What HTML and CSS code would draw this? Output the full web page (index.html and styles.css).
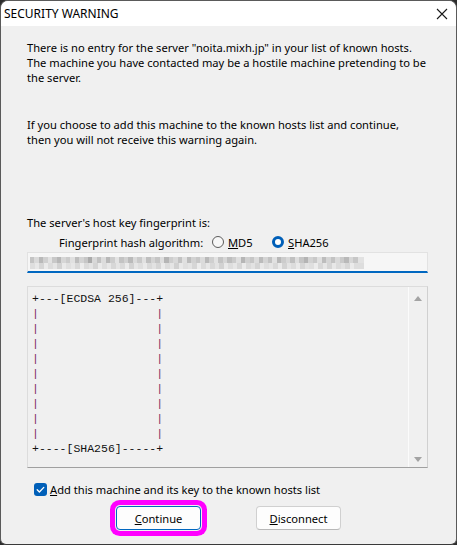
FILE: index.html
```html
<!DOCTYPE html>
<html>
<head>
<meta charset="utf-8">
<link rel="stylesheet" href="styles.css">
</head>
<body>
<div class="window">
  <div class="titlebar">
    <span class="title">SECURITY WARNING</span>
    <svg class="close" width="12" height="12" viewBox="0 0 12 12"><path d="M1 1 L11 11 M11 1 L1 11" stroke="#1a1a1a" stroke-width="1.1" fill="none"/></svg>
  </div>
  <div class="content">
    <p class="msg">There is no entry for the server "noita.mixh.jp" in your list of known hosts.<br>The machine you have contacted may be a hostile machine pretending to be<br>the server.</p>
    <p class="msg msg2">If you choose to add this machine to the known hosts list and continue,<br>then you will not receive this warning again.</p>
    <p class="fp-label">The server's host key fingerprint is:</p>
    <div class="algo-row">
      <span class="algo-label">Fingerprint hash algorithm:</span>
      <span class="radio"></span><span class="radio-label"><u>M</u>D5</span>
      <span class="radio checked"></span><span class="radio-label"><u>S</u>HA256</span>
    </div>
    <div class="fp-field"><div class="blurred"></div></div>
    <div class="art-box">
      <pre class="art">+---[ECDSA 256]---+
<span class="p">|</span>                 <span class="p">|</span>
<span class="p">|</span>                 <span class="p">|</span>
<span class="p">|</span>                 <span class="p">|</span>
<span class="p">|</span>                 <span class="p">|</span>
<span class="p">|</span>                 <span class="p">|</span>
<span class="p">|</span>                 <span class="p">|</span>
<span class="p">|</span>                 <span class="p">|</span>
<span class="p">|</span>                 <span class="p">|</span>
<span class="p">|</span>                 <span class="p">|</span>
+----[SHA256]-----+</pre>
      <div class="scrollbar">
        <span class="arrow up"></span>
        <span class="arrow down"></span>
      </div>
    </div>
    <div class="check-row">
      <span class="checkbox"><svg width="13" height="13" viewBox="0 0 13 13"><path d="M3.2 6.8 L5.4 9 L9.8 4.4" stroke="#fff" stroke-width="1.3" fill="none" stroke-linecap="round" stroke-linejoin="round"/></svg></span>
      <span class="check-label"><u>A</u>dd this machine and its key to the known hosts list</span>
    </div>
    <div class="buttons">
      <button class="btn default"><u>C</u>ontinue</button>
      <button class="btn"><u>D</u>isconnect</button>
    </div>
  </div>
</div>
</body>
</html>
```

FILE: styles.css
```css
html, body {
  margin: 0;
  padding: 0;
  background: #2c2c2c;
}
.window {
  width: 457px;
  height: 545px;
  box-sizing: border-box;
  border: 1px solid #5a5a5a;
  border-bottom-color: #3a3a3a;
  border-radius: 8px 8px 6px 6px;
  background: #f0f0f0;
  overflow: hidden;
  font-family: "Noto Sans", sans-serif;
  font-size: 11.15px;
  color: #000;
}
.titlebar {
  height: 25px;
  background: #fff;
  display: flex;
  align-items: center;
  justify-content: space-between;
  padding: 0 8px 0 3px;
}
.title {
  font-size: 12px;
  color: #000;
  line-height: 16px;
}
.close {
  display: block;
  margin-top: 1px;
}
.content {
  padding: 0 0 0 26px;
}
.msg {
  margin: 14px 0 0 0;
  line-height: 15px;
  white-space: nowrap;
}
.msg2 {
  margin-top: 32px;
}
.fp-label {
  margin: 68px 0 0 0;
  line-height: 15px;
}
.algo-row {
  display: flex;
  align-items: center;
  height: 16px;
  margin-top: 4px;
  padding-left: 32px;
}
.algo-label {
  width: 153px;
  white-space: nowrap;
}
.radio {
  width: 12px;
  height: 12px;
  box-sizing: border-box;
  border: 1px solid #5c5c5c;
  border-radius: 50%;
  background: #f7f7f7;
  margin-right: 4px;
}
.radio.checked {
  border: 3.5px solid #005fb8;
  background: #fff;
}
.radio-label {
  width: 44px;
}
.fp-field {
  width: 401px;
  height: 21px;
  box-sizing: border-box;
  margin-top: 2px;
  background: #f6f6f6;
  border: 1px solid #e2e2e2;
  border-bottom: 2px solid #0067c0;
  padding: 4px 0 0 2px;
}
.blurred {
  width: 334px;
  height: 12px;
  background:
    linear-gradient(90deg, #c4c4c4 0 4px, #dadada 4px 9px, #b9b9b9 9px 13px, #d0d0d0 13px 18px, #e2e2e2 18px 22px, #c8c8c8 22px 27px, #b7b7b7 27px 31px, #d6d6d6 31px 36px, #cbcbcb 36px 40px, #e0e0e0 40px 45px, #bdbdbd 45px 49px, #d3d3d3 49px 54px, #c6c6c6 54px 58px, #aaaaaa 58px 62px, #d8d8d8 62px 67px, #c1c1c1 67px 71px, #dcdcdc 71px 76px, #b8b8b8 76px 80px, #cdcdcd 80px 85px, #e3e3e3 85px 89px, #c3c3c3 89px 94px, #d1d1d1 94px 98px, #bababa 98px 103px, #dadada 103px 107px, #c9c9c9 107px 112px, #e1e1e1 112px 116px, #bfbfbf 116px 121px, #d4d4d4 121px 125px, #c5c5c5 125px 130px, #dedede 130px 134px, #b5b5b5 134px 139px, #cecece 139px 143px, #d9d9d9 143px 148px, #c2c2c2 148px 152px, #e0e0e0 152px 157px, #bcbcbc 157px 161px, #d2d2d2 161px 166px, #c7c7c7 166px 170px, #dbdbdb 170px 175px, #b9b9b9 175px 179px, #cfcfcf 179px 184px, #e2e2e2 184px 188px, #c4c4c4 188px 193px, #d6d6d6 193px 197px, #bebebe 197px 202px, #cbcbcb 202px 206px, #dfdfdf 206px 211px, #b6b6b6 211px 215px, #d0d0d0 215px 220px, #c6c6c6 220px 224px, #dcdcdc 224px 229px, #bbbbbb 229px 233px, #d4d4d4 233px 238px, #c2c2c2 238px 242px, #e1e1e1 242px 247px, #b8b8b8 247px 251px, #cccccc 251px 256px, #d8d8d8 256px 260px, #c0c0c0 260px 265px, #dedede 265px 269px, #c5c5c5 269px 274px, #b4b4b4 274px 278px, #d3d3d3 278px 283px, #c9c9c9 283px 287px, #e0e0e0 287px 292px, #bdbdbd 292px 296px, #d5d5d5 296px 301px, #c3c3c3 301px 305px, #dadada 305px 310px, #cacaca 310px 314px, #b9b9b9 314px 319px, #d7d7d7 319px 323px, #c7c7c7 323px 328px, #e2e2e2 328px 334px) top left / 100% 6px no-repeat,
    linear-gradient(90deg, #dedede 0 5px, #e8e8e8 5px 9px, #d6d6d6 9px 14px, #ebebeb 14px 18px, #dcdcdc 18px 23px, #e5e5e5 23px 27px, #d2d2d2 27px 32px, #e9e9e9 32px 36px, #dfdfdf 36px 41px, #e6e6e6 41px 45px, #d8d8d8 45px 50px, #ececec 50px 54px, #dbdbdb 54px 59px, #e3e3e3 59px 63px, #d4d4d4 63px 68px, #eaeaea 68px 72px, #dddddd 72px 77px, #e7e7e7 77px 81px, #d7d7d7 81px 86px, #e4e4e4 86px 90px, #dadada 90px 95px, #ebebeb 95px 99px, #d3d3d3 99px 104px, #e6e6e6 104px 108px, #dedede 108px 113px, #e9e9e9 113px 117px, #d9d9d9 117px 122px, #e2e2e2 122px 126px, #d5d5d5 126px 131px, #eaeaea 131px 135px, #dcdcdc 135px 140px, #e5e5e5 140px 144px, #d1d1d1 144px 149px, #e8e8e8 149px 153px, #dfdfdf 153px 158px, #e4e4e4 158px 162px, #d6d6d6 162px 167px, #ececec 167px 171px, #dbdbdb 171px 176px, #e7e7e7 176px 180px, #d8d8d8 180px 185px, #e3e3e3 185px 189px, #d2d2d2 189px 194px, #e9e9e9 194px 198px, #dddddd 198px 203px, #e6e6e6 203px 207px, #d7d7d7 207px 212px, #ebebeb 212px 216px, #dadada 216px 221px, #e2e2e2 221px 225px, #d4d4d4 225px 230px, #e8e8e8 230px 234px, #dedede 234px 239px, #e5e5e5 239px 243px, #d9d9d9 243px 248px, #eaeaea 248px 252px, #d3d3d3 252px 257px, #e4e4e4 257px 261px, #dcdcdc 261px 266px, #e9e9e9 266px 270px, #d6d6d6 270px 275px, #e3e3e3 275px 279px, #dfdfdf 279px 284px, #ececec 284px 288px, #d8d8d8 288px 293px, #e6e6e6 293px 297px, #d5d5d5 297px 302px, #e7e7e7 302px 306px, #dbdbdb 306px 311px, #e2e2e2 311px 315px, #d7d7d7 315px 320px, #eaeaea 320px 324px, #dddddd 324px 334px) bottom left / 100% 6px no-repeat;
}
.art-box {
  width: 401px;
  height: 182px;
  box-sizing: border-box;
  margin-top: 13px;
  border: 1px solid #dcdcdc;
  border-bottom-color: #a0a0a0;
  border-right-color: #d0d0d0;
  background: #f0f0f0;
  display: flex;
  justify-content: space-between;
}
.art {
  margin: 0;
  padding: 4px 0 0 4px;
  font-family: "Liberation Mono", monospace;
  font-size: 11.5px;
  line-height: 15px;
  color: #111;
}
.art .p {
  color: #7b2d5c;
}
.scrollbar {
  width: 18px;
  border-left: 1px solid #fbfbfb;
  display: flex;
  flex-direction: column;
  justify-content: space-between;
  align-items: center;
  padding: 9px 0 5px;
}
.arrow {
  width: 0;
  height: 0;
  border-left: 4.5px solid transparent;
  border-right: 4.5px solid transparent;
}
.arrow.up {
  border-bottom: 5px solid #a3a3a3;
}
.arrow.down {
  border-top: 5px solid #a3a3a3;
}
.check-row {
  display: flex;
  align-items: center;
  margin-top: 15px;
  padding-left: 7px;
  height: 13px;
}
.checkbox {
  width: 13px;
  height: 13px;
  border-radius: 3px;
  background: #005fb8;
  margin-right: 3px;
  display: block;
}
.checkbox svg {
  display: block;
}
.check-label {
  line-height: 15px;
}
.buttons {
  display: flex;
  justify-content: center;
  gap: 55px;
  margin: 10px 0 0 -26px;
}
.btn {
  width: 85px;
  height: 24px;
  box-sizing: border-box;
  font-family: "Noto Sans", sans-serif;
  font-size: 11.15px;
  color: #000;
  background: #fdfdfd;
  border: 1px solid #d0d0d0;
  border-bottom-color: #b8b8b8;
  border-radius: 4px;
  padding: 0;
}
.btn.default {
  border: 1px solid #0067c0;
  box-shadow: 0 0 0 1px #f0f0f0, 0 0 0 6px #ff00ff;
}
```
